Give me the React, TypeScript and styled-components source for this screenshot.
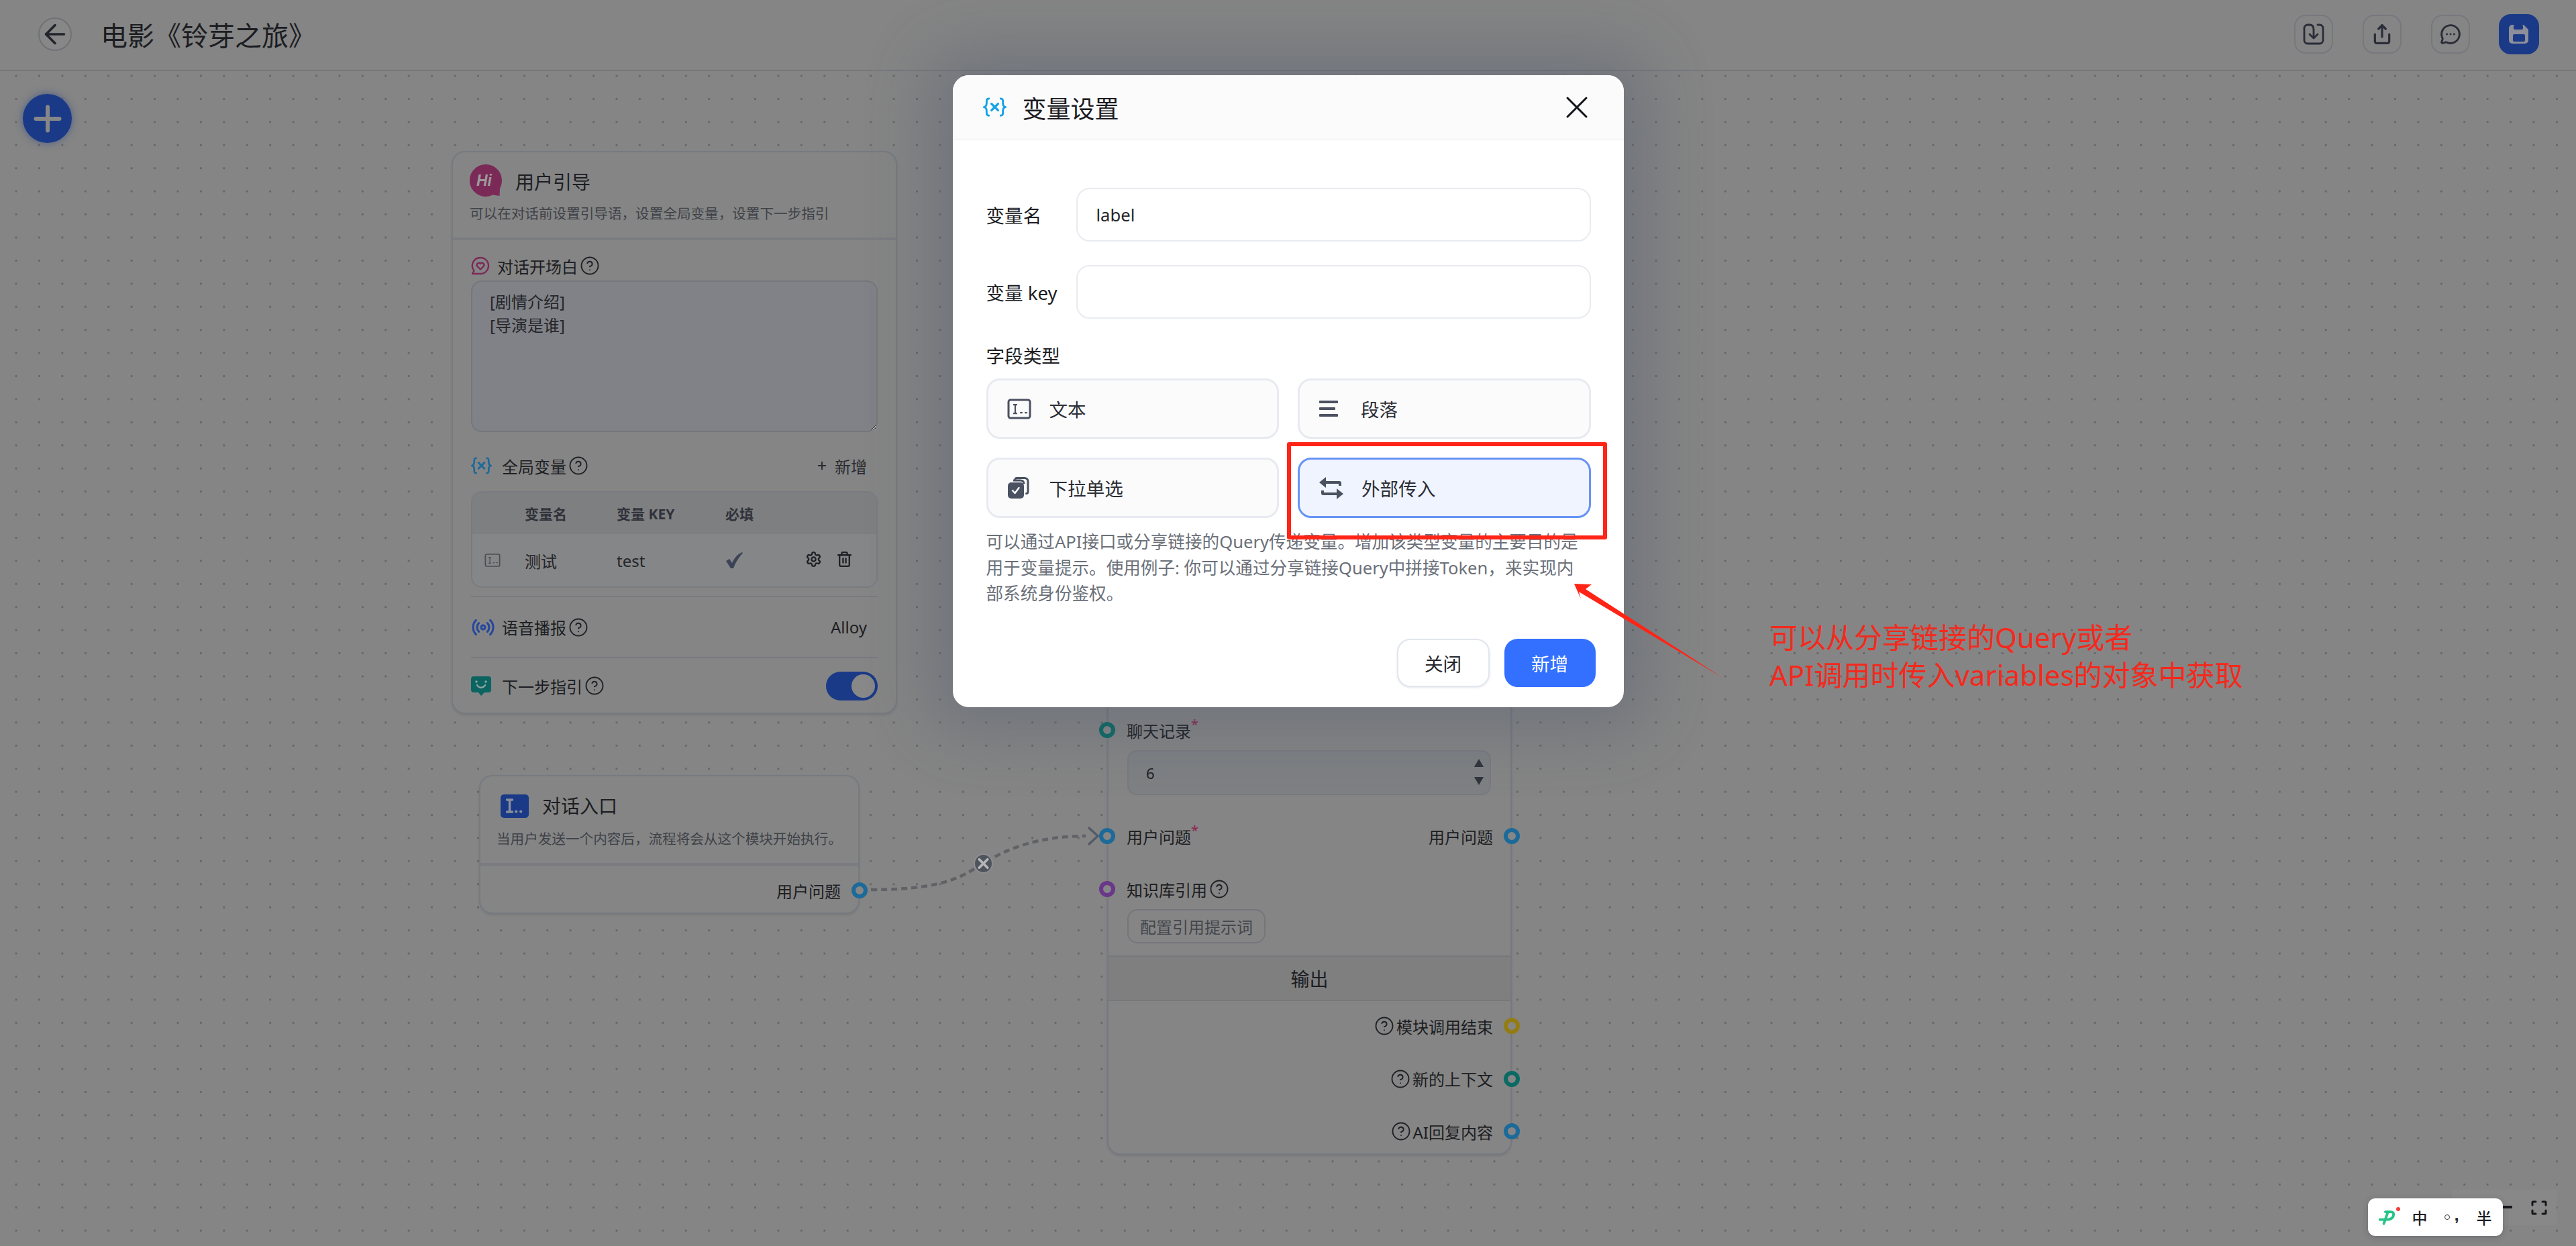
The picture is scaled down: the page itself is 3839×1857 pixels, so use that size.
import React from "react";
import styled, { createGlobalStyle } from "styled-components";
import { ArrowLeft, CircleHelp, MessageCircleMore, Plus, Radio, Settings, Share, Trash2, X } from "lucide-react";

const GlobalStyle = createGlobalStyle`
  html, body, #root { margin: 0; padding: 0; width: 100%; height: 100%; overflow: hidden; }
  body { font-family: "Noto Sans", "Noto Sans CJK SC", sans-serif; font-weight: 400; color: #1c1d22; background: #858585; }
  * { box-sizing: border-box; }
`;

const Page = styled.div`
  position: relative;
  width: 100vw;
  height: 100vh;
  display: flex;
  flex-direction: column;
  overflow: hidden;
`;

const Header = styled.header`
  flex: none;
  height: 106px;
  padding: 0 55px 2px 57px;
  display: flex;
  align-items: center;
  background: #858585;
  border-bottom: 2px solid #77787b;
`;
const BackButton = styled.button`
  width: 50px;
  height: 50px;
  padding: 0;
  margin-right: 43px;
  border: 2px solid #6f7176;
  border-radius: 50%;
  background: #878787;
  color: #22242c;
  display: flex;
  align-items: center;
  justify-content: center;
`;
const Title = styled.h1`
  margin: 4px 0 0;
  font-size: 40px;
  font-weight: 400;
  line-height: 50px;
`;
const Actions = styled.div`
  margin-left: auto;
  display: flex;
  align-items: center;
  gap: 44px;
`;
const IconButton = styled.button<{ $primary?: boolean }>`
  width: ${(p) => (p.$primary ? "60px" : "58px")};
  height: ${(p) => (p.$primary ? "60px" : "58px")};
  margin-left: ${(p) => (p.$primary ? "-1px" : "0")};
  padding: 0;
  border: ${(p) => (p.$primary ? "none" : "2px solid #77787e")};
  border-radius: ${(p) => (p.$primary ? "18px" : "17px")};
  background: ${(p) => (p.$primary ? "#1a3a87" : "#858585")};
  color: #2a2c38;
  display: flex;
  align-items: center;
  justify-content: center;
`;

const Canvas = styled.main`
  position: relative;
  flex: 1;
  background-color: #858585;
  background-image: radial-gradient(circle, #656565 1.3px, transparent 1.7px);
  background-size: 34.43px 34.43px;
  background-position: 6.8px -10.2px;
`;
const AddButton = styled.button`
  position: absolute;
  left: 34px;
  top: 34px;
  width: 73px;
  height: 73px;
  padding: 0;
  border: none;
  border-radius: 50%;
  background: #1a3a87;
  box-shadow: 0 0 12px rgba(26, 58, 135, 0.55);
  color: #878787;
  display: flex;
  align-items: center;
  justify-content: center;
`;
const Wires = styled.svg`
  position: absolute;
  left: 0;
  top: 0;
`;
const Node = styled.section<{ $x: number; $y: number; $w: number; $h?: number }>`
  position: absolute;
  left: ${(p) => p.$x}px;
  top: ${(p) => p.$y - 106}px;
  width: ${(p) => p.$w}px;
  height: ${(p) => (p.$h ? `${p.$h}px` : "auto")};
  background: #858585;
  border: 2px solid #767a80;
  border-radius: 20px;
  box-shadow: 0 2px 3px rgba(60, 65, 75, 0.18);
`;
const NodeHead = styled.div<{ $h: number }>`
  height: ${(p) => p.$h}px;
  padding: 18px 25px 0;
  border-bottom: 4px solid #7b7c80;
`;
const NodeTitleRow = styled.div`
  display: flex;
  align-items: center;
  gap: 20px;
  height: 50px;
  font-size: 28px;
`;
const NodeDesc = styled.p`
  margin: 8px 0 0;
  font-size: 20.6px;
  line-height: 30px;
  color: #3f4248;
  white-space: nowrap;
`;
const GuideBody = styled.div`
  padding: 18px 27px 0;
`;
const LabelRow = styled.div<{ $mt?: number }>`
  position: relative;
  display: flex;
  align-items: center;
  height: 40px;
  margin-top: ${(p) => p.$mt ?? 0}px;
  font-size: 24px;
  white-space: nowrap;
`;
const LabelIcon = styled.span<{ $w?: number }>`
  display: flex;
  align-items: center;
  justify-content: flex-start;
  width: ${(p) => p.$w ?? 46}px;
  flex: none;
`;
const Help = styled(CircleHelp)`
  flex: none;
  margin-left: 3px;
  color: #1f2025;
`;
const Opening = styled.textarea`
  display: block;
  width: 100%;
  height: 226px;
  margin-top: 2px;
  padding: 12px 26px;
  border: 2px solid #75777d;
  border-radius: 16px;
  background: #808287;
  color: #25262b;
  font: inherit;
  font-size: 24px;
  line-height: 35px;
  outline: none;
`;
const AddVar = styled.span`
  margin-left: auto;
  padding-right: 16px;
  display: flex;
  align-items: center;
  gap: 10px;
  color: #2a2b30;
`;
const VarTable = styled.div`
  margin-top: 18px;
  border: 2px solid #7a7b81;
  border-radius: 16px;
  overflow: hidden;
`;
const VarRow = styled.div<{ $head?: boolean }>`
  display: grid;
  grid-template-columns: 60px 137px 162px 119px 1fr;
  align-items: center;
  height: ${(p) => (p.$head ? "62px" : "78px")};
  padding-left: 18px;
  background: ${(p) => (p.$head ? "#7e7f81" : "#858687")};
  font-size: ${(p) => (p.$head ? "21px" : "24px")};
  font-weight: ${(p) => (p.$head ? 700 : 400)};
  color: ${(p) => (p.$head ? "#30323a" : "#24252a")};
`;
const RowTools = styled.div`
  display: flex;
  align-items: center;
  gap: 21px;
  margin-top: -4px;
  color: #1f2026;
`;
const SettingRow = styled.div<{ $h: number }>`
  display: flex;
  align-items: center;
  height: ${(p) => p.$h}px;
  border-top: 2px solid #797a7f;
  font-size: 24px;
`;
const VoiceRow = styled(SettingRow)`
  margin-top: 12px;
`;
const RightValue = styled.span`
  margin-left: auto;
  padding-right: 16px;
`;
const Toggle = styled.span`
  margin-left: auto;
  width: 77px;
  height: 43px;
  padding: 4px;
  border-radius: 22px;
  background: #1a3a87;
  display: flex;
  justify-content: flex-end;
`;
const ToggleKnob = styled.span`
  width: 35px;
  height: 35px;
  border-radius: 50%;
  background: #888888;
`;

const EntryHead = styled.div`
  height: 134px;
  padding: 18px 24px 0 24px;
  border-bottom: 5px solid #7b7c80;
`;
const EntryIcon = styled.span`
  margin-left: 6px;
  margin-top: 2px;
  width: 42px;
  height: 35px;
  border-radius: 5px;
  background: #1a3a87;
  display: flex;
  align-items: center;
  justify-content: center;
`;
const EntryDesc = styled(NodeDesc)`
  margin-top: 10px;
`;
const OutputLabel = styled.span`
  margin-left: auto;
  display: flex;
  align-items: center;
  gap: 3px;
  padding-right: 26px;
`;
const Port = styled.span<{ $color: string; $side: "left" | "right" }>`
  position: absolute;
  top: 8px;
  ${(p) => p.$side}: -14px;
  width: 24px;
  height: 24px;
  border: 6px solid ${(p) => p.$color};
  border-radius: 50%;
  background: #868686;
`;
const Star = styled.sup`
  align-self: flex-start;
  margin-top: 2px;
  font-size: 20px;
  line-height: 20px;
  color: #8b2250;
`;
const ChatBody = styled.div`
  padding: 66px 0 0;
`;
const PortRow = styled(LabelRow)`
  padding-left: 27px;
`;
const StepInput = styled.div`
  position: relative;
  margin: 10px 29px 0 28px;
  height: 67px;
  padding-left: 26px;
  border: 2px solid #797a80;
  border-radius: 14px;
  background: #7e8083;
  display: flex;
  align-items: center;
  font-size: 22px;
`;
const Stepper = styled.span`
  position: absolute;
  right: 9px;
  top: 11px;
  display: flex;
  flex-direction: column;
  gap: 15px;
`;
const Arrow = styled.span<{ $down?: boolean }>`
  width: 0;
  height: 0;
  border-left: 7px solid transparent;
  border-right: 7px solid transparent;
  ${(p) => (p.$down ? "border-top" : "border-bottom")}: 12px solid #30343c;
`;
const OutlineButton = styled.button`
  display: block;
  margin: 10px 0 0 28px;
  height: 51px;
  width: 206px;
  padding: 0;
  border: 2px solid #75767c;
  border-radius: 15px;
  background: #858585;
  color: #44464c;
  font: inherit;
  font-size: 24px;
`;
const SectionBar = styled.div`
  margin-top: 18px;
  height: 68px;
  display: flex;
  align-items: center;
  justify-content: center;
  background: #7f7f80;
  border-top: 2px solid #77787c;
  border-bottom: 2px solid #77787c;
  font-size: 28px;
`;
const Outputs = styled.div`
  padding: 17px 0 13px;
  display: flex;
  flex-direction: column;
  gap: 38.5px;
`;
const WireKnob = styled.span`
  position: absolute;
  left: 1451px;
  top: ${1272 - 106}px;
  width: 29px;
  height: 30px;
  border: 2px solid #8e8e90;
  border-radius: 50%;
  background: #4f545c;
  color: #b4b6ba;
  display: flex;
  align-items: center;
  justify-content: center;
`;
const ViewControls = styled.div`
  position: absolute;
  right: 29px;
  bottom: 31px;
  width: 156px;
  height: 53px;
  padding-left: 46px;
  background: #888888;
  display: flex;
  align-items: center;
  gap: 28px;
  color: #16171b;
`;
const MinusBar = styled.span`
  width: 44px;
  height: 4px;
  margin-top: -2px;
  background: #16171b;
`;

const ModalLayer = styled.div`
  position: absolute;
  inset: 0;
  display: flex;
  justify-content: center;
  padding-top: 112px;
`;
const Modal = styled.div`
  width: 1000px;
  height: 942px;
  border-radius: 24px;
  background: #ffffff;
  box-shadow: 0 0 90px 40px rgba(70, 85, 105, 0.32);
  overflow: hidden;
`;
const ModalHead = styled.div`
  height: 97px;
  padding: 0 42px 0 45px;
  display: flex;
  align-items: center;
  gap: 24px;
  background: #fbfbfc;
  border-bottom: 2px solid #f4f5f8;
`;
const ModalTitle = styled.h2`
  margin: 2px 0 0;
  font-size: 36px;
  font-weight: 400;
  color: #1b1c22;
`;
const CloseButton = styled.button`
  margin-left: auto;
  width: 56px;
  height: 56px;
  padding: 0;
  border: none;
  background: transparent;
  color: #14151a;
  display: flex;
  align-items: center;
  justify-content: center;
`;
const ModalBody = styled.div`
  padding: 71px 49px 0 50px;
`;
const Field = styled.label`
  display: flex;
  align-items: center;
  margin-bottom: 35px;
  font-size: 27.6px;
  color: #1d1e24;
`;
const FieldName = styled.span`
  width: 134px;
  flex: none;
`;
const TextInput = styled.input`
  flex: 1;
  height: 80px;
  padding: 0 28px;
  border: 2.5px solid #e8ebf0;
  border-radius: 20px;
  background: #fff;
  color: #24252b;
  font: inherit;
  font-size: 25.6px;
  outline: none;
`;
const GroupLabel = styled.div`
  margin-top: 2px;
  height: 40px;
  line-height: 40px;
  font-size: 27.6px;
  color: #1d1e24;
`;
const TypeGrid = styled.div`
  display: grid;
  grid-template-columns: 1fr 1fr;
  gap: 28px;
  margin-top: 14px;
`;
const TypeCard = styled.div<{ $active?: boolean }>`
  height: 90px;
  display: flex;
  align-items: center;
  padding-left: ${(p) => (p.$active ? "29px" : "28px")};
  border: 3px solid ${(p) => (p.$active ? "#6694f6" : "#e8eaf1")};
  border-radius: 20px;
  background: ${(p) => (p.$active ? "#f0f4ff" : "#fbfbfc")};
  font-size: 27.6px;
  color: #2c2e36;
`;
const TypeIcon = styled.span`
  width: 63px;
  flex: none;
  display: flex;
  align-items: center;
`;
const Description = styled.p`
  margin: 17px 0 0;
  font-size: 25.6px;
  line-height: 38.5px;
  color: #6b7079;
  white-space: nowrap;
`;
const ModalFooter = styled.div`
  margin: 47px -7px 0 0;
  display: flex;
  justify-content: flex-end;
  gap: 22px;
`;
const FooterButton = styled.button<{ $primary?: boolean }>`
  width: ${(p) => (p.$primary ? "136px" : "138px")};
  height: 72px;
  padding: 0;
  border: ${(p) => (p.$primary ? "none" : "2.5px solid #e2e6ee")};
  border-radius: 20px;
  background: ${(p) => (p.$primary ? "#3370ff" : "#ffffff")};
  box-shadow: ${(p) => (p.$primary ? "none" : "0 1px 3px rgba(50, 60, 80, 0.12)")};
  color: ${(p) => (p.$primary ? "#ffffff" : "#24262c")};
  font: inherit;
  font-size: 27.6px;
`;

const RedBox = styled.div`
  position: absolute;
  left: 1918px;
  top: 659px;
  width: 477px;
  height: 145px;
  border: 6px solid #ff2416;
  border-radius: 3px;
`;
const RedArrow = styled.svg`
  position: absolute;
  left: 0;
  top: 0;
`;
const RedNote = styled.p`
  position: absolute;
  left: 2637px;
  top: 922px;
  margin: 0;
  font-size: 42px;
  line-height: 56px;
  color: #f5281c;
  white-space: nowrap;
`;

const ImeBar = styled.div`
  position: absolute;
  left: 3529px;
  top: 1786px;
  width: 201px;
  height: 56px;
  padding-left: 16px;
  border-radius: 11px;
  background: #ffffff;
  box-shadow: 0 2px 8px rgba(40, 45, 60, 0.25);
  display: flex;
  align-items: center;
  font-family: "Noto Sans CJK SC", sans-serif;
  font-size: 23px;
  font-weight: 500;
  color: #1d1f26;
`;
const ImeLogoSlot = styled.span`
  width: 38px;
  flex: none;
  display: flex;
`;
const ImeDot = styled.span`
  position: absolute;
  left: 42px;
  top: 13px;
  width: 6px;
  height: 6px;
  border-radius: 50%;
  background: #f0413c;
`;
const ImeItem = styled.span<{ $w: number }>`
  width: ${(p) => p.$w}px;
  text-align: center;
  flex: none;
`;
const ImePunct = styled.span`
  width: 50px;
  flex: none;
  display: flex;
  align-items: center;
  justify-content: center;
  gap: 6px;
`;
const ImeRing = styled.span`
  width: 8px;
  height: 8px;
  border: 1.5px solid #3a3c44;
  border-radius: 50%;
`;
const ImeComma = styled.span`
  font-family: "Liberation Sans", sans-serif;
  font-size: 26px;
  font-weight: 700;
  line-height: 26px;
  margin-top: -8px;
`;

const VarMark = ({ w = 30, color }: { w?: number; color: string }) => (
  <svg width={w} height={(w * 30) / 36} viewBox="0 0 36 30" fill="none" stroke={color} strokeWidth="3" strokeLinecap="round">
    <path d="M9 2C5 2 5.500 5 5.500 9c0 3-.5 5-3.500 6 3 1 3.500 3 3.500 6 0 4-.5 7 3.500 7" />
    <path d="M27 2c4 0 3.500 3 3.500 7 0 3 .5 5 3.500 6-3 1-3.500 3-3.500 6 0 4 .5 7-3.500 7" />
    <path d="M13 10l10 10M23 10L13 20" strokeWidth="3.400" />
  </svg>
);
const HiMark = () => (
  <svg width="48" height="50" viewBox="0 0 48 50">
    <path d="M24 0a24 24 0 0 1 24 24c0 5-1.500 9-3 12l-.5 11-10-1.500A24 24 0 1 1 24 0z" fill="#7b2a58" />
    <text x="10" y="32" fontFamily="Liberation Sans, sans-serif" fontSize="23" fontWeight="700" fontStyle="italic" fill="#9c9a9c">Hi</text>
  </svg>
);
const HeartBubble = () => (
  <svg width="28" height="28" viewBox="0 0 28 28" fill="none" stroke="#7b2a58" strokeWidth="2.400" strokeLinejoin="round">
    <path d="M14 2a12 12 0 0 1 0 24H2l2.500-4.500A12 12 0 0 1 14 2z" />
    <path d="M14 19.500l-5-5a3.100 3.100 0 0 1 5-3.600 3.100 3.100 0 0 1 5 3.600z" />
  </svg>
);
const BotBubble = () => (
  <svg width="30" height="29" viewBox="0 0 30 29">
    <path d="M4 0h22a4 4 0 0 1 4 4v16a4 4 0 0 1-4 4h-6l-5 5-4-5H4a4 4 0 0 1-4-4V4a4 4 0 0 1 4-4z" fill="#0b6460" />
    <path d="M9 13c3 5 9 5 12 0" fill="none" stroke="#91a5a2" strokeWidth="2.400" strokeLinecap="round" />
    <circle cx="8" cy="8" r="1.700" fill="#91a5a2" />
    <circle cx="22" cy="8" r="1.700" fill="#91a5a2" />
  </svg>
);
const InputMark = ({ w = 36, h = 31, color, sw = 3 }: { w?: number; h?: number; color: string; sw?: number }) => (
  <svg width={w} height={h} viewBox="0 0 36 31" fill="none" stroke={color} strokeWidth={sw}>
    <rect x="2" y="2" width="32" height="27" rx="3" />
    <path d="M9 9h6M12 9v13M9 22h6" strokeWidth={sw * 0.75} />
    <path d="M20 21h2M27 21h2" strokeWidth={sw * 0.75} strokeLinecap="round" />
  </svg>
);
const EntryGlyph = () => (
  <svg width="26" height="22" viewBox="0 0 26 22" fill="none" stroke="#8a8f9c" strokeWidth="3.400" strokeLinecap="round">
    <path d="M1.500 2h8M5.500 2v18M1.500 20h8" />
    <path d="M15 19.500h.5M22 19.500h.5" strokeWidth="3.800" />
  </svg>
);
const LinesMark = () => (
  <svg width="30" height="24" viewBox="0 0 30 24" fill="#4a5160">
    <rect x="1" y="0" width="28" height="4" rx="1" />
    <rect x="1" y="10" width="24" height="4" rx="1" />
    <rect x="1" y="20" width="28" height="4" rx="1" />
  </svg>
);
const StackMark = () => (
  <svg width="33" height="33" viewBox="0 0 33 33" fill="none">
    <path d="M12 3.500c0-1.500 1-2 2-2h12c3 0 5 2 5 5v15c0 2-1 3-2.500 3" stroke="#4a5160" strokeWidth="3" strokeLinecap="round" />
    <path d="M9 5h11c3 0 5 2 5 5" stroke="#4a5160" strokeWidth="3" />
    <rect x="1" y="8" width="24" height="24" rx="5" fill="#4a5160" />
    <path d="M8 20l3.500 4 6-8" stroke="#fff" strokeWidth="2.400" strokeLinecap="round" strokeLinejoin="round" />
  </svg>
);
const SwapMark = () => (
  <svg width="36" height="33" viewBox="0 0 36 33" fill="#4a5160">
    <path d="M10 0v6h20a3 3 0 0 1 3 3v4h-4v-3H10v6L0 8z" />
    <path d="M26 33v-6H6a3 3 0 0 1-3-3v-4h4v3h19v-6l10 8z" />
  </svg>
);
const ImportMark = () => (
  <svg width="32" height="32" viewBox="0 0 32 32" fill="none" stroke="#2a2c38" strokeWidth="2.800" strokeLinecap="round" strokeLinejoin="round">
    <path d="M10 2H7a5 5 0 0 0-5 5v18a5 5 0 0 0 5 5h18a5 5 0 0 0 5-5V7a5 5 0 0 0-5-5h-3" />
    <path d="M10 2c5 0 6 4 6 7v12M10 16l6 6 6-6" />
  </svg>
);
const SaveMark = () => (
  <svg width="30" height="30" viewBox="0 0 30 30">
    <path d="M5 1h17l7 7v16a5 5 0 0 1-5 5H5a5 5 0 0 1-5-5V6a5 5 0 0 1 5-5z" fill="#8d8e99" />
    <rect x="7" y="1" width="14" height="7" rx="2" fill="#1a3a87" />
    <rect x="6" y="15" width="18" height="11" rx="2" fill="#1a3a87" />
  </svg>
);
const CornersMark = () => (
  <svg width="24" height="22" viewBox="0 0 24 22" fill="none" stroke="#16171b" strokeWidth="3" strokeLinecap="round" strokeLinejoin="round">
    <path d="M2 7V3a1 1 0 0 1 1-1h4M17 2h4a1 1 0 0 1 1 1v4M22 15v4a1 1 0 0 1-1 1h-4M7 20H3a1 1 0 0 1-1-1v-4" />
  </svg>
);
const ImeLogo = () => (
  <svg width="26" height="23" viewBox="0 0 34 30" fill="none" stroke="#27c386" strokeWidth="5" strokeLinecap="round" strokeLinejoin="round">
    <path d="M2 19h16c7 0 11-5 11-10 0-3-2-5-5-5H13" />
    <path d="M18 4L10 27" />
  </svg>
);

export default function App() {
  const help = <Help size={30} strokeWidth={1.5} />;
  return (
    <Page>
      <GlobalStyle />
      <Header>
        <BackButton aria-label="back">
          <ArrowLeft size={46} strokeWidth={1.9} />
        </BackButton>
        <Title>电影《铃芽之旅》</Title>
        <Actions>
          <IconButton aria-label="import"><ImportMark /></IconButton>
          <IconButton aria-label="export"><Share size={32} strokeWidth={2.4} /></IconButton>
          <IconButton aria-label="chat"><MessageCircleMore size={32} strokeWidth={2.2} /></IconButton>
          <IconButton $primary aria-label="save"><SaveMark /></IconButton>
        </Actions>
      </Header>
      <Canvas>
        <Wires width="3839" height="1751" viewBox="0 106 3839 1751" fill="none">
          <path d="M1298 1326C1420 1326 1440 1300 1466 1287C1500 1264 1550 1246 1618 1246" stroke="#606266" strokeWidth="4.500" strokeDasharray="9 6" />
          <path d="M1623 1234L1636 1246L1623 1258" stroke="#555b66" strokeWidth="3.500" strokeLinecap="round" />
        </Wires>
        <AddButton aria-label="add"><Plus size={60} strokeWidth={2.4} /></AddButton>

        <Node $x={673} $y={225} $w={664} $h={839}>
          <NodeHead $h={131}>
            <NodeTitleRow><HiMark />用户引导</NodeTitleRow>
            <NodeDesc>可以在对话前设置引导语，设置全局变量，设置下一步指引</NodeDesc>
          </NodeHead>
          <GuideBody>
            <LabelRow>
              <LabelIcon $w={39}><HeartBubble /></LabelIcon>对话开场白{help}
            </LabelRow>
            <Opening readOnly defaultValue={"[剧情介绍]\n[导演是谁]"} />
            <LabelRow $mt={30}>
              <LabelIcon><VarMark w={31} color="#1c6a99" /></LabelIcon>全局变量{help}
              <AddVar><Plus size={18} strokeWidth={2.6} />新增</AddVar>
            </LabelRow>
            <VarTable>
              <VarRow $head><span /><span>变量名</span><span>变量 KEY</span><span>必填</span><span /></VarRow>
              <VarRow>
                <InputMark w={24} h={22} color="#4c4e56" sw={2.6} />
                <span>测试</span>
                <span>test</span>
                <svg width="26" height="24" viewBox="0 0 26 24" fill="#3c4356"><path d="M1 13l5-3 4 6C13 9 18 3 25 0l1 1C20 8 15 15 12 24H8z" /></svg>
                <RowTools><Settings size={25} strokeWidth={2.2} /><Trash2 size={25} strokeWidth={2.2} /></RowTools>
              </VarRow>
            </VarTable>
            <VoiceRow $h={91}>
              <LabelIcon><Radio size={36} strokeWidth={2} color="#24479e" /></LabelIcon>语音播报{help}
              <RightValue>Alloy</RightValue>
            </VoiceRow>
            <SettingRow $h={84}>
              <LabelIcon><BotBubble /></LabelIcon>下一步指引{help}
              <Toggle><ToggleKnob /></Toggle>
            </SettingRow>
          </GuideBody>
        </Node>

        <Node $x={714} $y={1155} $w={567} $h={207}>
          <EntryHead>
            <NodeTitleRow>
              <EntryIcon><EntryGlyph /></EntryIcon>对话入口
            </NodeTitleRow>
            <EntryDesc>当用户发送一个内容后，流程将会从这个模块开始执行。</EntryDesc>
          </EntryHead>
          <LabelRow $mt={16}>
            <OutputLabel>用户问题</OutputLabel>
            <Port $side="right" $color="#1c6a99" />
          </LabelRow>
        </Node>

        <Node $x={1650} $y={1000} $w={603}>
          <ChatBody>
            <PortRow>
              <Port $side="left" $color="#0b6a64" />聊天记录<Star>*</Star>
            </PortRow>
            <StepInput>6<Stepper><Arrow /><Arrow $down /></Stepper></StepInput>
            <PortRow $mt={41}>
              <Port $side="left" $color="#1c6a99" />用户问题<Star>*</Star>
              <OutputLabel>用户问题</OutputLabel>
              <Port $side="right" $color="#1c6a99" />
            </PortRow>
            <PortRow $mt={39}>
              <Port $side="left" $color="#693889" />知识库引用{help}
            </PortRow>
            <OutlineButton>配置引用提示词</OutlineButton>
            <SectionBar>输出</SectionBar>
            <Outputs>
              <LabelRow>
                <OutputLabel>{help}模块调用结束</OutputLabel>
                <Port $side="right" $color="#937c12" />
              </LabelRow>
              <LabelRow>
                <OutputLabel>{help}新的上下文</OutputLabel>
                <Port $side="right" $color="#0b6a64" />
              </LabelRow>
              <LabelRow>
                <OutputLabel>{help}AI回复内容</OutputLabel>
                <Port $side="right" $color="#1c6a99" />
              </LabelRow>
            </Outputs>
          </ChatBody>
        </Node>

        <WireKnob><X size={26} strokeWidth={3.6} /></WireKnob>
        <ViewControls><MinusBar /><CornersMark /></ViewControls>
      </Canvas>

      <ModalLayer>
        <Modal>
          <ModalHead>
            <VarMark w={35} color="#15a3e6" />
            <ModalTitle>变量设置</ModalTitle>
            <CloseButton aria-label="close"><X size={56} strokeWidth={1.3} /></CloseButton>
          </ModalHead>
          <ModalBody>
            <Field><FieldName>变量名</FieldName><TextInput readOnly defaultValue="label" /></Field>
            <Field><FieldName>变量 key</FieldName><TextInput readOnly defaultValue="" /></Field>
            <GroupLabel>字段类型</GroupLabel>
            <TypeGrid>
              <TypeCard><TypeIcon><InputMark color="#4a5160" /></TypeIcon>文本</TypeCard>
              <TypeCard><TypeIcon><LinesMark /></TypeIcon>段落</TypeCard>
              <TypeCard><TypeIcon><StackMark /></TypeIcon>下拉单选</TypeCard>
              <TypeCard $active><TypeIcon><SwapMark /></TypeIcon>外部传入</TypeCard>
            </TypeGrid>
            <Description>
              可以通过API接口或分享链接的Query传递变量。增加该类型变量的主要目的是<br />
              用于变量提示。使用例子: 你可以通过分享链接Query中拼接Token，来实现内<br />
              部系统身份鉴权。
            </Description>
            <ModalFooter>
              <FooterButton>关闭</FooterButton>
              <FooterButton $primary>新增</FooterButton>
            </ModalFooter>
          </ModalBody>
        </Modal>
      </ModalLayer>

      <RedBox />
      <RedArrow width="3839" height="1857" viewBox="0 0 3839 1857" fill="#ff2416">
        <path d="M2346 870L2372 871L2363 878L2567 1010L2353 882L2356 893Z" />
      </RedArrow>
      <RedNote>
        可以从分享链接的Query或者<br />
        API调用时传入variables的对象中获取
      </RedNote>

      <ImeBar>
        <ImeLogoSlot><ImeLogo /></ImeLogoSlot>
        <ImeDot />
        <ImeItem $w={46}>中</ImeItem>
        <ImePunct><ImeRing /><ImeComma>,</ImeComma></ImePunct>
        <ImeItem $w={46}>半</ImeItem>
      </ImeBar>
    </Page>
  );
}
